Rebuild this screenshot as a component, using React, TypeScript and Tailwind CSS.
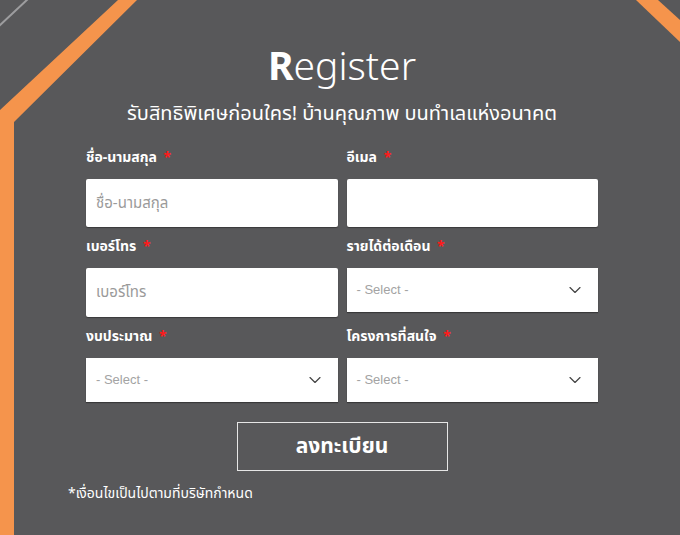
import { ChevronDown } from "lucide-react";

const thai = "font-['Noto_Sans_Thai','Noto_Sans','Liberation_Sans',sans-serif]";

function Label({ text }: { text: string }) {
  return (
    <label className="block h-[21px] leading-[21px] mb-[11px] text-[14px] font-bold text-white">
      {text} <span className="text-[#ff1a1a] ml-[3px]">*</span>
    </label>
  );
}

function TextField({ label, placeholder, h }: { label: string; placeholder?: string; h: string }) {
  return (
    <div>
      <Label text={label} />
      <input
        type="text"
        placeholder={placeholder}
        className={`w-full ${h} bg-white rounded-[2px] px-[10px] text-[15px] text-gray-700 placeholder:text-[#9a9a9a] outline-none shadow-[0_1px_1px_rgba(0,0,0,0.35)]`}
      />
    </div>
  );
}

function SelectField({ label }: { label: string }) {
  return (
    <div>
      <Label text={label} />
      <div className="w-full h-[44px] bg-white flex items-center justify-between pl-[10px] pr-[13px] shadow-[0_1px_1px_rgba(0,0,0,0.35)]">
        <span className="text-[13px] text-[#a3a3a3] font-['Liberation_Sans',sans-serif]">- Select -</span>
        <ChevronDown size={20} strokeWidth={1.4} className="text-[#444]" />
      </div>
    </div>
  );
}

export default function App() {
  return (
    <div className={`relative w-[680px] h-[535px] overflow-hidden bg-[#58585a] ${thai}`}>
      {/* เส้นตกแต่ง */}
      <svg className="absolute inset-0 pointer-events-none" width="680" height="535">
        <line x1="-2" y1="27" x2="29" y2="-2" stroke="#9d9d9f" strokeWidth="2" />
        <polygon points="0,110 118,0 137,0 14,122 14,535 0,535" fill="#f5944c" />
        <polygon points="636,0 658,0 680,20 680,42" fill="#f5944c" />
      </svg>

      <div className="relative ml-[68px] w-[548px] pt-[41px]">
        <h1 className="text-center text-[39px] leading-[48px] text-white font-light font-['Noto_Sans','Liberation_Sans',sans-serif]">
          <span className="font-bold">R</span>egister
        </h1>
        <p className="text-center text-white text-[20px] leading-[26px] mt-[12px]">
          รับสิทธิพิเศษก่อนใคร! บ้านคุณภาพ บนทำเลแห่งอนาคต
        </p>

        <div className="px-[18px] mt-[20px] grid grid-cols-2 gap-x-[9px] gap-y-[9px]">
          <TextField label="ชื่อ-นามสกุล" placeholder="ชื่อ-นามสกุล" h="h-[48px]" />
          <TextField label="อีเมล" h="h-[48px]" />
          <TextField label="เบอร์โทร" placeholder="เบอร์โทร" h="h-[49px]" />
          <SelectField label="รายได้ต่อเดือน" />
          <SelectField label="งบประมาณ" />
          <SelectField label="โครงการที่สนใจ" />
        </div>

        <div className="flex justify-center mt-[20px]">
          <button
            type="button"
            className="w-[211px] h-[49px] border border-[#e6e6e6] text-white text-[21px] font-bold"
          >
            ลงทะเบียน
          </button>
        </div>

        <p className="mt-[13px] text-white text-[14px] leading-[20px]">*เงื่อนไขเป็นไปตามที่บริษัทกำหนด</p>
      </div>
    </div>
  );
}
